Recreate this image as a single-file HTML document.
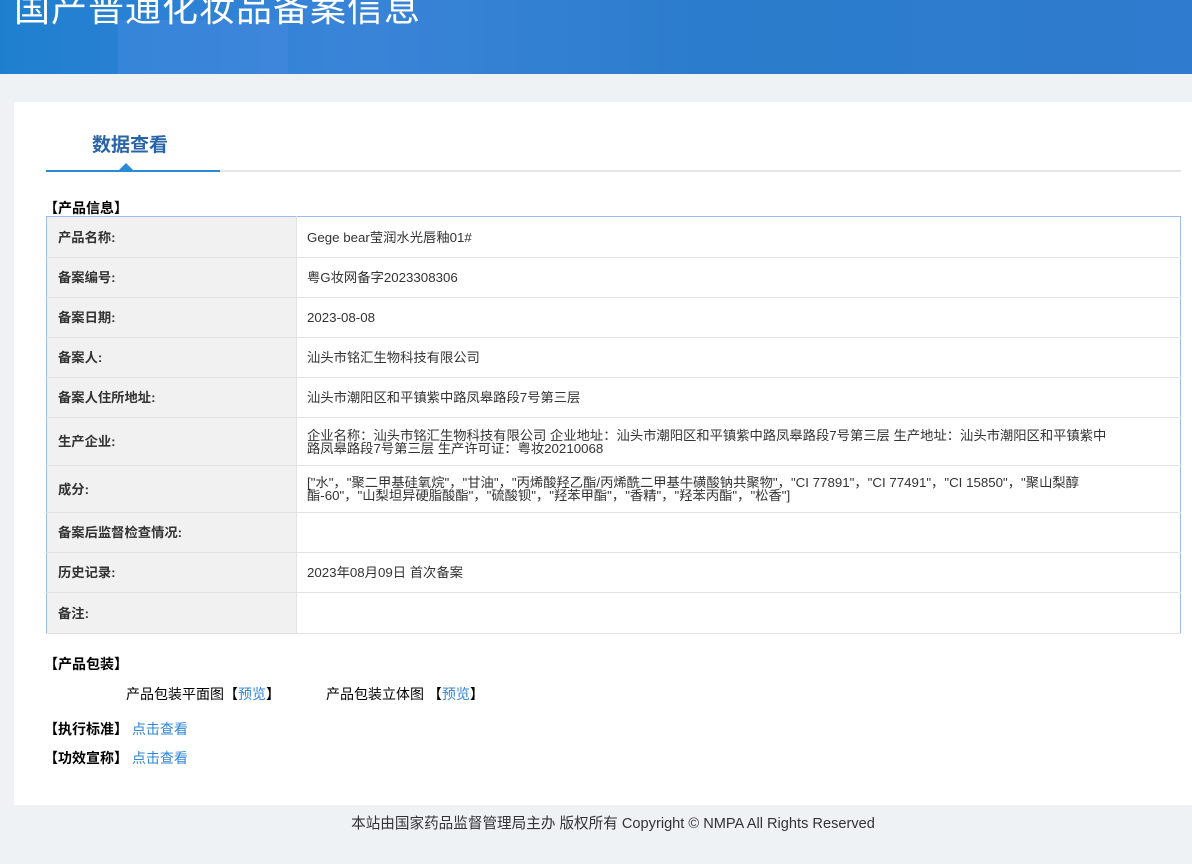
<!DOCTYPE html>
<html><head><meta charset="utf-8"><style>
*{margin:0;padding:0;box-sizing:border-box}
body{width:1192px;height:864px;overflow:hidden;background:#eef2f5;font-family:"Liberation Sans","Noto Sans CJK SC",sans-serif;font-size:13px;color:#333;position:relative}
.hdr{position:absolute;left:0;top:0;width:1192px;height:74px;background:linear-gradient(90deg,#1f7fcf 0%,#3a84d8 30%,#2b7ccc 60%,#2f7bcf 100%);overflow:hidden}
.hdr .b{position:absolute;left:118px;top:20px;width:170px;height:60px;background:rgba(80,140,230,.35)}
.hdr h1{position:absolute;left:14px;top:-20px;font-size:36px;font-weight:normal;color:#fff;letter-spacing:1px;white-space:nowrap}
.card{position:absolute;left:14px;top:102px;width:1178px;height:703px;background:#fff}
.tab{position:absolute;left:78px;top:28px;font-size:19px;font-weight:bold;color:#2a64a8}
.line{position:absolute;left:32px;top:68px;width:1135px;height:2px;background:#e6e6e6}
.line i{position:absolute;left:0;top:0;width:174px;height:2px;background:#2b8ad8}
.tri{position:absolute;left:105px;top:61px;width:0;height:0;border-left:7px solid transparent;border-right:7px solid transparent;border-bottom:7px solid #2b8ad8}
.sec{position:absolute;font-weight:bold;color:#000;font-size:14px}
table{position:absolute;left:32px;top:114px;width:1135px;border-collapse:collapse;border:1px solid #9dbcea}
td{border-bottom:1px solid #e3e3e3;vertical-align:middle;line-height:13px;font-size:13.3px}
td.l{width:250px;background:#f1f1f1;font-weight:bold;padding-left:11px;border-right:1px solid #e3e3e3}
td.v{padding-left:10px;padding-right:70px}
a{color:#2f86d8;text-decoration:none}
.foot{position:absolute;top:812px;left:0;width:1226px;text-align:center;font-size:14.6px;color:#333}
.bt{position:absolute;color:#000;font-size:14px}
</style></head><body>
<div class="hdr"><div class="b"></div><h1>国产普通化妆品备案信息</h1></div>
<div class="card">
<div class="tab">数据查看</div>
<div class="line"><i></i></div><div class="tri"></div>
<div class="sec" style="left:30px;top:96px">【产品信息】</div>
<table>
<tr style="height:41px"><td class="l">产品名称:</td><td class="v">Gege bear莹润水光唇釉01#</td></tr>
<tr style="height:40px"><td class="l">备案编号:</td><td class="v">粤G妆网备字2023308306</td></tr>
<tr style="height:40px"><td class="l">备案日期:</td><td class="v">2023-08-08</td></tr>
<tr style="height:40px"><td class="l">备案人:</td><td class="v">汕头市铭汇生物科技有限公司</td></tr>
<tr style="height:40px"><td class="l">备案人住所地址:</td><td class="v">汕头市潮阳区和平镇紫中路凤皋路段7号第三层</td></tr>
<tr style="height:48px"><td class="l">生产企业:</td><td class="v">企业名称：汕头市铭汇生物科技有限公司 企业地址：汕头市潮阳区和平镇紫中路凤皋路段7号第三层 生产地址：汕头市潮阳区和平镇紫中路凤皋路段7号第三层 生产许可证：粤妆20210068</td></tr>
<tr style="height:47px"><td class="l">成分:</td><td class="v">["水"，"聚二甲基硅氧烷"，"甘油"，"丙烯酸羟乙酯/丙烯酰二甲基牛磺酸钠共聚物"，"CI 77891"，"CI 77491"，"CI 15850"，"聚山梨醇酯-60"，"山梨坦异硬脂酸酯"，"硫酸钡"，"羟苯甲酯"，"香精"，"羟苯丙酯"，"松香"]</td></tr>
<tr style="height:40px"><td class="l">备案后监督检查情况:</td><td class="v"></td></tr>
<tr style="height:40px"><td class="l">历史记录:</td><td class="v">2023年08月09日 首次备案</td></tr>
<tr style="height:41px"><td class="l">备注:</td><td class="v"></td></tr>
</table>
<div class="sec" style="left:30px;top:552px">【产品包装】</div>
<div class="bt" style="left:112px;top:582px">产品包装平面图【<a>预览</a>】</div>
<div class="bt" style="left:312px;top:582px">产品包装立体图 【<a>预览</a>】</div>
<div class="sec" style="left:30px;top:617px">【执行标准】 <a style="font-weight:normal">点击查看</a></div>
<div class="sec" style="left:30px;top:646px">【功效宣称】 <a style="font-weight:normal">点击查看</a></div>
</div>
<div class="foot">本站由国家药品监督管理局主办 版权所有 Copyright © NMPA All Rights Reserved</div>
</body></html>
